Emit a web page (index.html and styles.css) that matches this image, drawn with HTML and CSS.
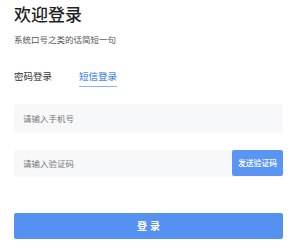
FILE: index.html
```html
<!DOCTYPE html>
<html lang="zh">
<head>
<meta charset="utf-8">
<link rel="stylesheet" href="styles.css">
</head>
<body>
<div class="page">
  <h1 class="title">欢迎登录</h1>
  <p class="slogan">系统口号之类的话简短一句</p>
  <div class="tabs">
    <span class="tab">密码登录</span>
    <span class="tab active">短信登录</span>
  </div>
  <div class="field phone">
    <span class="placeholder">请输入手机号</span>
  </div>
  <div class="field code">
    <span class="placeholder">请输入验证码</span>
    <span class="send">发送验证码</span>
  </div>
  <div class="login">登录</div>
</div>
</body>
</html>
```
FILE: styles.css
```css
html, body {
  margin: 0;
  padding: 0;
  background: #ffffff;
}
body {
  font-family: "Noto Sans CJK SC", "Noto Sans", sans-serif;
  color: #222;
}
.page {
  display: flex;
  flex-direction: column;
  padding: 2px 17px 0 14px;
}
.title {
  margin: 0;
  font-size: 17px;
  line-height: 24px;
  font-weight: 500;
  color: #1f1f1f;
}
.slogan {
  margin: 7px 0 0;
  font-size: 8.5px;
  line-height: 12px;
  color: #555;
}
.tabs {
  display: flex;
  gap: 27px;
  margin-top: 25px;
}
.tab {
  font-size: 9.5px;
  line-height: 13px;
  padding-bottom: 3px;
  color: #333;
  border-bottom: 1.5px solid transparent;
}
.tab.active {
  color: #4f8ef2;
  font-weight: 500;
  border-bottom-color: #8db3f5;
}
.field {
  display: flex;
  align-items: center;
  justify-content: space-between;
  background: #f7f8fa;
  border-radius: 2px;
}
.phone {
  margin-top: 16.5px;
  height: 29px;
}
.code {
  margin-top: 17px;
  height: 27px;
}
.placeholder {
  padding-left: 9px;
  font-size: 8.5px;
  color: #777;
}
.send {
  display: flex;
  align-items: center;
  justify-content: center;
  width: 51px;
  height: 26px;
  align-self: flex-start;
  background: #5b95f3;
  color: #fff;
  font-size: 7.8px;
  font-weight: 500;
  border-radius: 2px;
}
.login {
  margin-top: 36px;
  height: 26.5px;
  display: flex;
  align-items: center;
  justify-content: center;
  background: #5591f1;
  color: #fff;
  font-size: 10px;
  font-weight: 700;
  letter-spacing: 3px;
  text-indent: 3px;
  border-radius: 2px;
}
```
